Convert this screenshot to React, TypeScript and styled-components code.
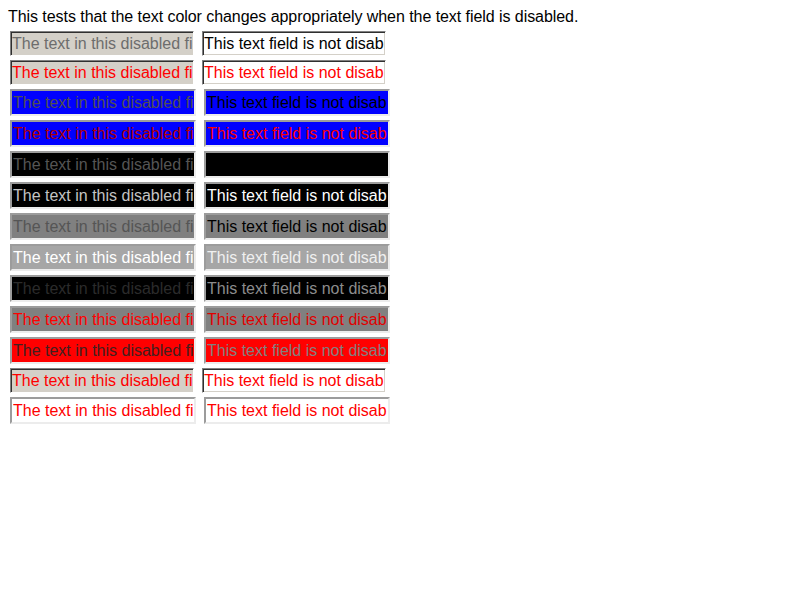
import React from "react";
import styled, { createGlobalStyle, css } from "styled-components";

const Global = createGlobalStyle`
  html, body { background: #fff; }
  body {
    margin: 8px;
    font-family: "Liberation Sans", Arial, sans-serif;
    font-size: 16px;
    color: #000;
  }
`;

const Intro = styled.div`
  line-height: 18px;
  margin: 0;
  letter-spacing: -0.06px;
`;

const Rows = styled.div`
  display: flex;
  flex-direction: column;
  gap: 4px;
  margin-top: 5px;
  padding-left: 2px;
`;

const Row = styled.div`
  display: flex;
  gap: 8px;
  align-items: flex-start;
`;

type Kind = "native" | "styled";

const Field = styled.input<{ $kind: Kind; $bg: string; $fg: string }>`
  box-sizing: border-box;
  margin: 0;
  padding: 0 1px;
  font-family: "Liberation Sans", Arial, sans-serif;
  font-size: 16px;
  outline: none;
  background: ${(p) => p.$bg};
  color: ${(p) => p.$fg};
  -webkit-text-fill-color: ${(p) => p.$fg};
  opacity: 1;
  ${(p) =>
    p.$kind === "native"
      ? css`
          width: 184px;
          height: 25px;
          border: 1px solid;
          border-color: #808080 #ffffff #ffffff #808080;
          box-shadow: inset 1px 1px 0 #303030, inset -1px -1px 0 #d4d0c8;
        `
      : css`
          width: 186px;
          height: 27px;
          border: 2px solid;
          border-color: #9c9c9c #ececec #ececec #9c9c9c;
        `}
`;

type Look = { bg: string; fg: string };
type RowSpec = { kind: Kind; d: Look; e: Look };

const rows: RowSpec[] = [
  { kind: "native", d: { bg: "#d4d0c8", fg: "#6d6d6d" }, e: { bg: "#ffffff", fg: "#000000" } },
  { kind: "native", d: { bg: "#d4d0c8", fg: "#ff0000" }, e: { bg: "#ffffff", fg: "#ff0000" } },
  { kind: "styled", d: { bg: "#0000ff", fg: "#505050" }, e: { bg: "#0000ff", fg: "#000000" } },
  { kind: "styled", d: { bg: "#0000ff", fg: "#b00000" }, e: { bg: "#0000ff", fg: "#ff0000" } },
  { kind: "styled", d: { bg: "#000000", fg: "#555555" }, e: { bg: "#000000", fg: "#000000" } },
  { kind: "styled", d: { bg: "#000000", fg: "#c4c4c4" }, e: { bg: "#000000", fg: "#ffffff" } },
  { kind: "styled", d: { bg: "#808080", fg: "#555555" }, e: { bg: "#808080", fg: "#000000" } },
  { kind: "styled", d: { bg: "#a6a6a6", fg: "#ffffff" }, e: { bg: "#a6a6a6", fg: "#f0f0f0" } },
  { kind: "styled", d: { bg: "#000000", fg: "#2b2b2b" }, e: { bg: "#000000", fg: "#8c8c8c" } },
  { kind: "styled", d: { bg: "#808080", fg: "#ff0000" }, e: { bg: "#808080", fg: "#e00000" } },
  { kind: "styled", d: { bg: "#ff0000", fg: "#402020" }, e: { bg: "#ff0000", fg: "#808080" } },
  { kind: "native", d: { bg: "#d4d0c8", fg: "#ff0000" }, e: { bg: "#ffffff", fg: "#ff0000" } },
  { kind: "styled", d: { bg: "#ffffff", fg: "#ff0000" }, e: { bg: "#ffffff", fg: "#ff0000" } },
];

const DISABLED_TEXT = "The text in this disabled field should be displayed as dimmed or grey";
const ENABLED_TEXT = "This text field is not disabled";

export default function App() {
  return (
    <>
      <Global />
      <Intro>This tests that the text color changes appropriately when the text field is disabled.</Intro>
      <Rows>
        {rows.map((r, i) => (
          <Row key={i}>
            <Field $kind={r.kind} $bg={r.d.bg} $fg={r.d.fg} disabled defaultValue={DISABLED_TEXT} />
            <Field $kind={r.kind} $bg={r.e.bg} $fg={r.e.fg} defaultValue={ENABLED_TEXT} />
          </Row>
        ))}
      </Rows>
    </>
  );
}
